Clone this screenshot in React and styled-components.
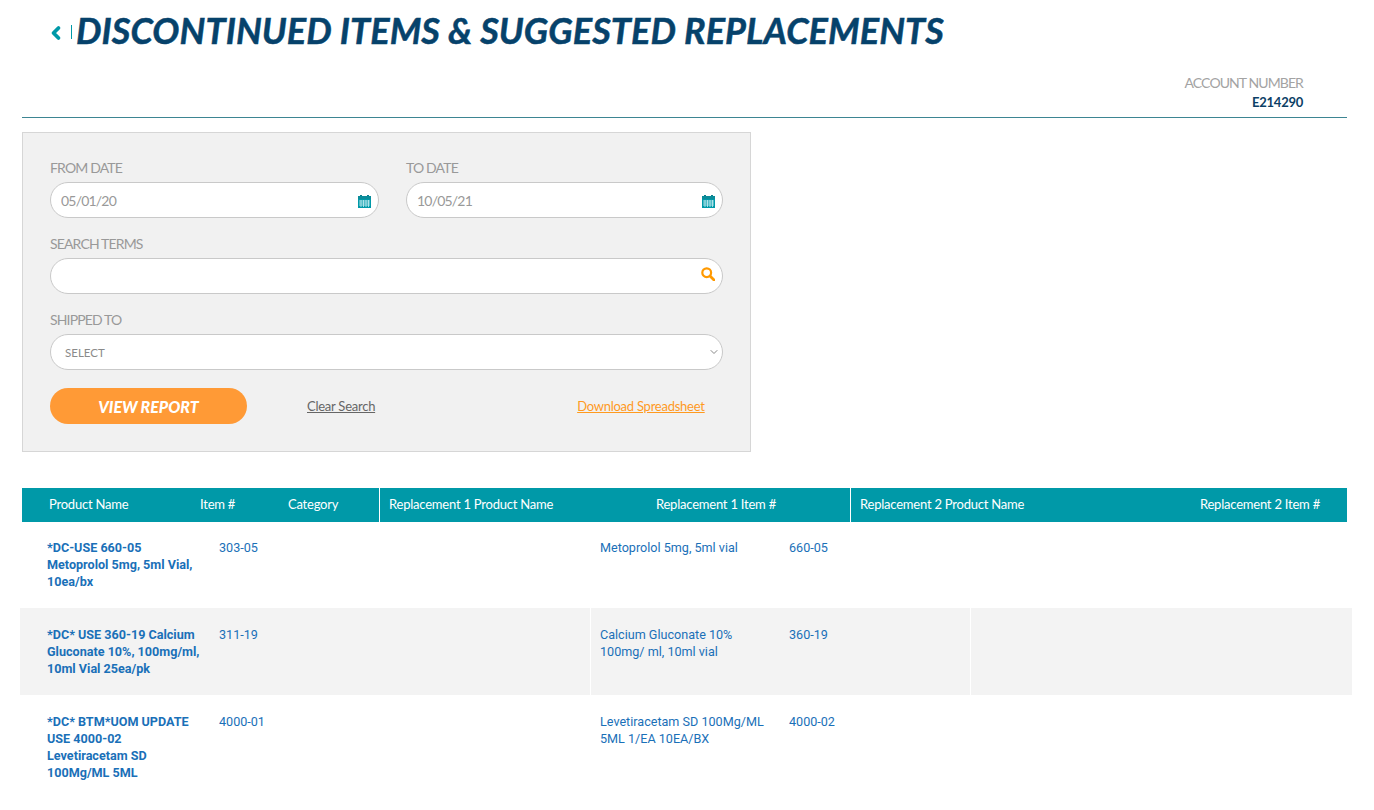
import styled, { createGlobalStyle } from 'styled-components';
import { ChevronDown, ChevronLeft } from 'lucide-react';

const GlobalStyle = createGlobalStyle`
    body {
        margin: 0;
        background: #fff;
        font-family: Lato, "Liberation Sans", sans-serif;
    }
`
const Page = styled.div`
    padding: 0 27px 0 22px;
    overflow: hidden;
    height: 810px;
    box-sizing: border-box;
`
const Header = styled.header`
    height: 117px;
    border-bottom: 1px solid #3d8592;
    display: flex;
    flex-direction: column;
`
const TitleRow = styled.div`
    display: flex;
    align-items: center;
    height: 60px;
    padding-left: 24px;
`
const BackIcon = styled.span`
    display: flex;
    align-items: center;
    color: #0099a8;
    margin-right: 4px;
    svg {
        margin-top: 6px;
    }
    &::after {
        content: "";
        width: 1px;
        height: 14px;
        background: #0099a8;
        margin: 4px 0 0 5px;
    }
`
const Title = styled.h1`
    margin: 0;
    font-size: 36px;
    font-weight: 700;
    font-style: italic;
    letter-spacing: 0.1px;
    -webkit-text-stroke: 0.5px #06426b;
    color: #06426b;
    text-transform: uppercase;
    white-space: nowrap;
`
const Account = styled.div`
    margin-top: auto;
    padding: 0 44px 6px 0;
    text-align: right;
`
const AccountLabel = styled.div`
    font-size: 14px;
    line-height: 20px;
    letter-spacing: -0.9px;
    color: #a3a3a3;
`
const AccountValue = styled.div`
    font-size: 13px;
    line-height: 18px;
    font-weight: 700;
    letter-spacing: -0.25px;
    color: #0c3f66;
`
const Panel = styled.form`
    width: 729px;
    height: 320px;
    box-sizing: border-box;
    margin-top: 14px;
    padding: 27px 27px 0;
    background: #f1f1f1;
    border: 1px solid #d6d6d6;
`
const DateRow = styled.div`
    display: grid;
    grid-template-columns: 329px 317px;
    gap: 27px;
`
const Field = styled.label`
    display: block;
    margin-bottom: 18px;
`
const FieldLabel = styled.span`
    display: block;
    font-size: 14px;
    line-height: 16px;
    height: 22px;
    color: #999;
    letter-spacing: -0.85px;
    text-transform: uppercase;
`
const InputWrap = styled.div`
    position: relative;
`
const Input = styled.input`
    width: 100%;
    height: 36px;
    box-sizing: border-box;
    padding: 0 40px 0 10px;
    border: 1px solid #c9c9c9;
    border-radius: 18px;
    background: #fff;
    font-family: inherit;
    font-size: 14px;
    letter-spacing: -0.8px;
    color: #999;
    outline: none;
`
const Select = styled.select`
    width: 100%;
    height: 36px;
    box-sizing: border-box;
    padding: 0 30px 0 14px;
    border: 1px solid #c9c9c9;
    border-radius: 18px;
    background: #fff;
    font-family: inherit;
    font-size: 11.5px;
    color: #8a8a8a;
    appearance: none;
    outline: none;
`
const FieldIcon = styled.span`
    position: absolute;
    top: ${(p) => p.$top || 0}px;
    bottom: ${(p) => p.$bottom || 0}px;
    right: ${(p) => p.$right}px;
    display: flex;
    align-items: center;
    color: ${(p) => p.$color};
    pointer-events: none;
`
const Actions = styled.div`
    display: flex;
    align-items: center;
`
const ViewButton = styled.button`
    width: 197px;
    height: 36px;
    padding: 0;
    border: 0;
    border-radius: 18px;
    background: #ff9a36;
    color: #fff;
    font-family: inherit;
    font-size: 16px;
    font-weight: 900;
    font-style: italic;
    letter-spacing: 0;
`
const ActionLink = styled.a`
    font-size: 13px;
    text-decoration: underline;
    color: ${(p) => p.$color};
    margin-left: ${(p) => p.$left}px;
    letter-spacing: -0.25px;
`
const Table = styled.section`
    margin-top: 36px;
`
const HeadRow = styled.div`
    display: grid;
    grid-template-columns: 357px 471px 1fr;
    height: 34px;
    background: #0099a8;
`
const HeadGroup = styled.div`
    display: flex;
    align-items: center;
    padding: 0 ${(p) => p.$right || 0}px 2px ${(p) => p.$left}px;
    border-left: ${(p) => (p.$divided ? '1px solid #fff' : '0')};
    justify-content: ${(p) => (p.$divided ? 'space-between' : 'flex-start')};
`
const HeadCell = styled.span`
    font-size: 13px;
    color: #fff;
    letter-spacing: -0.22px;
    white-space: nowrap;
    width: ${(p) => (p.$width ? `${p.$width}px` : 'auto')};
`
const Row = styled.div`
    display: grid;
    grid-template-columns: 570px 380px 1fr;
    margin: 0 -5px 0 -2px;
    background: ${(p) => (p.$shaded ? '#f3f3f3' : '#fff')};
    font-family: Roboto, "Liberation Sans", sans-serif;
    font-size: 12.6px;
    line-height: 17px;
    color: #1a70b8;
`
const RowGroup = styled.div`
    display: flex;
    align-items: flex-start;
    padding: ${(p) => p.$top}px 0 18px ${(p) => p.$left}px;
    border-left: ${(p) => (p.$divided ? '1px solid #fff' : '0')};
`
const NameCell = styled.div`
    width: 155px;
    margin-right: 17px;
    font-weight: 700;
`
const ItemCell = styled.div`
    flex: 0 0 auto;
`
const ReplacementCell = styled.div`
    width: 168px;
    margin-right: 21px;
`

const CalendarIcon = () => (
    <svg width="13" height="13" viewBox="0 0 13 13">
        <rect x="2" y="0" width="2" height="2" fill="#0b7f8c" />
        <rect x="9" y="0" width="2" height="2" fill="#0b7f8c" />
        <rect x="0" y="1" width="13" height="3" fill="#0b8c9a" />
        <rect x="0" y="4" width="13" height="9" fill="#0099a8" />
        <path d="M1 6h11M1 8h11M1 10h11M3 5v7M5.500 5v7M8 5v7M10.500 5v7" stroke="#c8eef2" strokeWidth="0.8" />
    </svg>
)

const SearchIcon = () => (
    <svg width="14" height="14" viewBox="0 0 14 14" fill="none" stroke="#ff9900">
        <circle cx="5.700" cy="5.700" r="4.400" strokeWidth="2.200" />
        <path d="M9 9l4 4" strokeWidth="2.800" strokeLinecap="round" />
    </svg>
)

const rows = [
    {
        name: '*DC-USE 660-05 Metoprolol 5mg, 5ml Vial, 10ea/bx',
        item: '303-05',
        replacement: 'Metoprolol 5mg, 5ml vial',
        replacementItem: '660-05',
    },
    {
        name: '*DC* USE 360-19 Calcium Gluconate 10%, 100mg/ml, 10ml Vial 25ea/pk',
        item: '311-19',
        replacement: 'Calcium Gluconate 10% 100mg/ ml, 10ml vial',
        replacementItem: '360-19',
    },
    {
        name: '*DC* BTM*UOM UPDATE USE 4000-02 Levetiracetam SD 100Mg/ML 5ML',
        item: '4000-01',
        replacement: 'Levetiracetam SD 100Mg/ML 5ML 1/EA 10EA/BX',
        replacementItem: '4000-02',
    },
]

const App = () => {
    return (
        <Page>
            <GlobalStyle />
            <Header>
                <TitleRow>
                    <BackIcon>
                        <ChevronLeft size={20} strokeWidth={4.500} />
                    </BackIcon>
                    <Title>Discontinued Items &amp; Suggested Replacements</Title>
                </TitleRow>
                <Account>
                    <AccountLabel>ACCOUNT NUMBER</AccountLabel>
                    <AccountValue>E214290</AccountValue>
                </Account>
            </Header>

            <Panel>
                <DateRow>
                    <Field>
                        <FieldLabel>From Date</FieldLabel>
                        <InputWrap>
                            <Input defaultValue="05/01/20" />
                            <FieldIcon $right={8} $top={3}><CalendarIcon /></FieldIcon>
                        </InputWrap>
                    </Field>
                    <Field>
                        <FieldLabel>To Date</FieldLabel>
                        <InputWrap>
                            <Input defaultValue="10/05/21" />
                            <FieldIcon $right={8} $top={3}><CalendarIcon /></FieldIcon>
                        </InputWrap>
                    </Field>
                </DateRow>
                <Field>
                    <FieldLabel>Search Terms</FieldLabel>
                    <InputWrap>
                        <Input />
                        <FieldIcon $right={8} $bottom={4}><SearchIcon /></FieldIcon>
                    </InputWrap>
                </Field>
                <Field>
                    <FieldLabel>Shipped To</FieldLabel>
                    <InputWrap>
                        <Select>
                            <option>SELECT</option>
                        </Select>
                        <FieldIcon $right={3} $color="#888">
                            <ChevronDown size={12} />
                        </FieldIcon>
                    </InputWrap>
                </Field>
                <Actions>
                    <ViewButton type="button">VIEW REPORT</ViewButton>
                    <ActionLink $color="#666" $left={60}>Clear Search</ActionLink>
                    <ActionLink $color="#ff9a1f" $left={202}>Download Spreadsheet</ActionLink>
                </Actions>
            </Panel>

            <Table>
                <HeadRow>
                    <HeadGroup $left={27}>
                        <HeadCell $width={151}>Product Name</HeadCell>
                        <HeadCell $width={88}>Item #</HeadCell>
                        <HeadCell>Category</HeadCell>
                    </HeadGroup>
                    <HeadGroup $left={9} $right={74} $divided>
                        <HeadCell>Replacement 1 Product Name</HeadCell>
                        <HeadCell>Replacement 1 Item #</HeadCell>
                    </HeadGroup>
                    <HeadGroup $left={9} $right={27} $divided>
                        <HeadCell>Replacement 2 Product Name</HeadCell>
                        <HeadCell>Replacement 2 Item #</HeadCell>
                    </HeadGroup>
                </HeadRow>
                {rows.map((row, i) => (
                    <Row key={row.item} $shaded={i % 2 === 1}>
                        <RowGroup $left={27} $top={i === 0 ? 17 : 18}>
                            <NameCell>{row.name}</NameCell>
                            <ItemCell>{row.item}</ItemCell>
                        </RowGroup>
                        <RowGroup $left={9} $top={i === 0 ? 17 : 18} $divided>
                            <ReplacementCell>{row.replacement}</ReplacementCell>
                            <ItemCell>{row.replacementItem}</ItemCell>
                        </RowGroup>
                        <RowGroup $left={9} $top={i === 0 ? 17 : 18} $divided />
                    </Row>
                ))}
            </Table>
        </Page>
    )
}

export default App
